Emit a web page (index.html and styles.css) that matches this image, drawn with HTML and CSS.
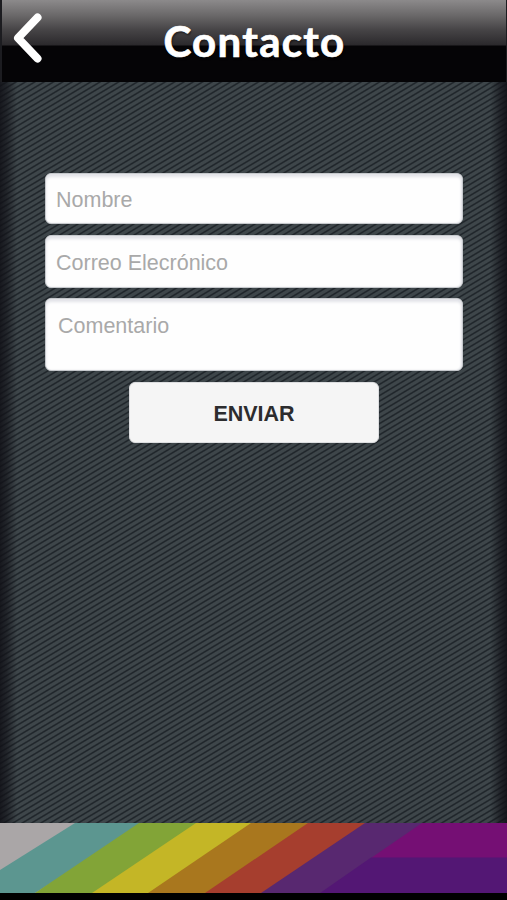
FILE: index.html
```
<!DOCTYPE html>
<html lang="es">
<head>
    <meta charset="UTF-8">
    <meta name="viewport" content="width=device-width, initial-scale=1.0">
    <title>Contacto</title>
    <link rel="stylesheet" href="styles.css">
</head>
<body>
<div class="app">
    <header class="header">
        <button class="back-button" type="button" aria-label="Volver">
            <svg width="30" height="50" viewBox="0 0 30 50">
                <path d="M24.5 4.5 L5 25 L24.5 45.5" fill="none" stroke="#fff" stroke-width="8" stroke-linecap="round" stroke-linejoin="round"/>
            </svg>
        </button>
        <h1>Contacto</h1>
    </header>

    <main class="content">
        <form class="contact-form">
            <input type="text" class="field field-name" placeholder="Nombre">
            <input type="text" class="field field-email" placeholder="Correo Elecrónico">
            <textarea class="field field-comment" placeholder="Comentario"></textarea>
            <button type="button" class="send-button">ENVIAR</button>
        </form>
    </main>

    <footer class="footer">
        <svg width="507" height="70" viewBox="0 0 507 70">
            <rect width="507" height="70" fill="#aaa6a7"/>
            <path d="M75 0 H145 L35 70 H0 V47 Z" fill="#5c9690"/>
            <path d="M139 0 H200 L98 70 H35 Z" fill="#82a437"/>
            <path d="M196 0 H255 L155 70 H92 Z" fill="#c4b626"/>
            <path d="M251 0 H312 L210 70 H148 Z" fill="#a9771e"/>
            <path d="M308 0 H368 L266 70 H205 Z" fill="#a63e2e"/>
            <path d="M365 0 H430 L330 70 H261 Z" fill="#582870"/>
            <path d="M422 0 H507 V35 H371 Z" fill="#750f74"/>
            <path d="M371 34.5 H507 V70 H320 Z" fill="#531774"/>
        </svg>
    </footer>
</div>
</body>
</html>
```
FILE: styles.css
```
* {
    box-sizing: border-box;
}
body {
    margin: 0;
    background-color: #000;
    font-family: "Liberation Sans", Arial, sans-serif;
}
.app {
    display: flex;
    flex-direction: column;
    width: 507px;
    height: 900px;
    padding-bottom: 7px;
    overflow: hidden;
}
.header {
    display: flex;
    align-items: flex-start;
    height: 82px;
    padding-left: 11px;
    border-left: 2px solid #1c1c20;
    border-right: 1px solid #1c1c20;
    background: linear-gradient(#8c8a8b 0, #6b696a 15px, #464446 30px, #2b292c 45px, #050406 46px, #050406 100%);
}
.back-button {
    width: 30px;
    height: 50px;
    margin-top: 13px;
    padding: 0;
    border: none;
    background: none;
}
.back-button svg {
    display: block;
}
.header h1 {
    flex: 1;
    margin: 15px 40px 0 0;
    font-family: Lato, sans-serif;
    font-size: 42px;
    font-weight: bold;
    line-height: 52px;
    letter-spacing: 1.3px;
    text-align: center;
    color: #fff;
    -webkit-text-stroke: 0.7px #fff;
    text-shadow: 1px 2px 2px rgba(0, 0, 0, 0.5);
}
/* fondo rayado con los bordes oscurecidos */
.content {
    flex: 1;
    padding: 91px 44px 0 45px;
    background:
        linear-gradient(90deg, rgba(16, 16, 22, 0.85) 0, rgba(16, 16, 22, 0.6) 7px, rgba(16, 16, 22, 0) 17px, rgba(16, 16, 22, 0) calc(100% - 17px), rgba(16, 16, 22, 0.6) calc(100% - 7px), rgba(16, 16, 22, 0.9) 100%),
        repeating-linear-gradient(149deg, #3e464a 0, #3e464a 2.1px, #20262b 3.2px, #20262b 3.7px, #3e464a 4.8px);
}
.contact-form {
    display: flex;
    flex-direction: column;
}
.field {
    width: 100%;
    margin: 0;
    padding: 3px 10px 0;
    border: 1px solid #c5c8cc;
    border-radius: 6px;
    background-color: #fefefe;
    box-shadow: inset 0 3px 3px #e2e3e8, inset -1px 0 2px #e2e3e8;
    font-family: inherit;
    font-size: 21.5px;
    resize: none;
}
.field::placeholder {
    color: #a9a9a9;
    opacity: 1;
}
.field-name {
    height: 51px;
    margin-bottom: 11px;
}
.field-email {
    height: 53px;
    margin-bottom: 10px;
}
.field-comment {
    height: 73px;
    padding: 15px 12px 0;
    margin-bottom: 11px;
    overflow: hidden;
}
.send-button {
    align-self: center;
    width: 250px;
    height: 61px;
    padding: 3px 0 0;
    border: 1px solid #dcdddf;
    border-radius: 6px;
    background-color: #f5f5f5;
    font-family: inherit;
    font-size: 21.5px;
    font-weight: bold;
    color: #2c2c2e;
}
.footer {
    height: 70px;
}
.footer svg {
    display: block;
}
```
